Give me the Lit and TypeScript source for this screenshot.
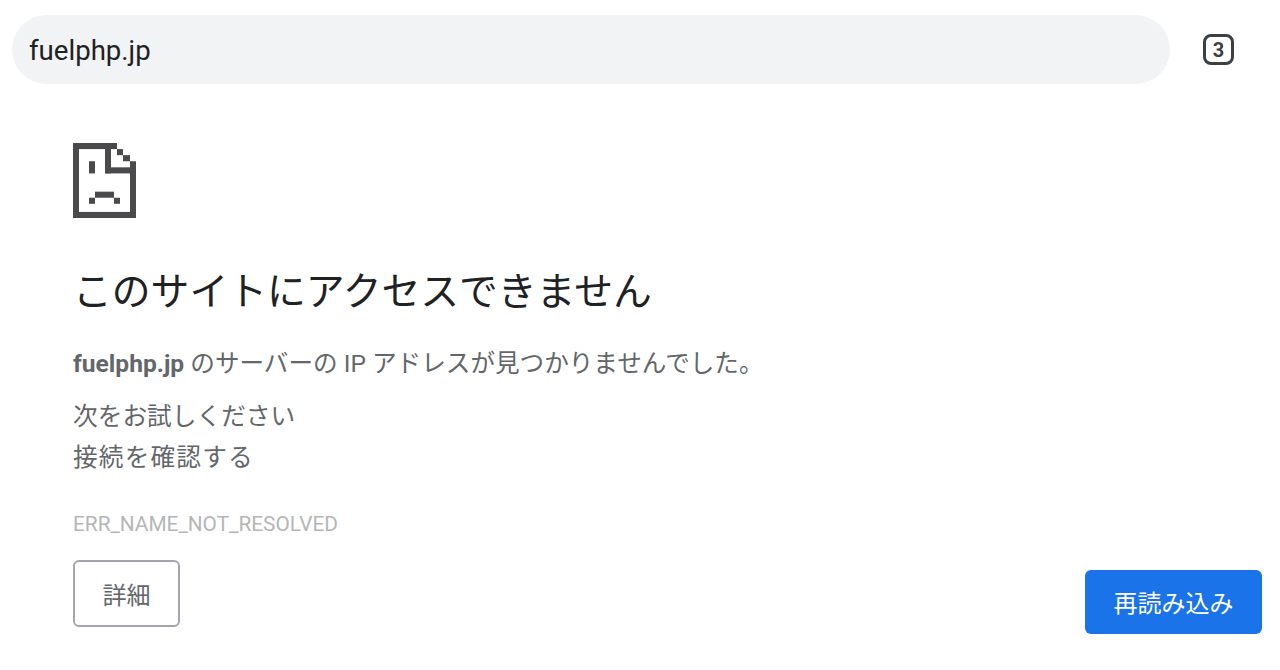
import { LitElement, html, css } from "lit";
import { customElement } from "lit/decorators.js";

@customElement("app-root")
export class AppRoot extends LitElement {
  static styles = css`
    :host { display: block; height: 670px; background: #fff; font-family: Roboto, "Noto Sans CJK JP", sans-serif; overflow: hidden; }
    .top { display: flex; align-items: center; padding: 15px 46px 0 12px; height: 69px; }
    .url { flex: 1; height: 69px; border-radius: 35px; background: #f1f3f4; display: flex; align-items: center; padding: 2px 0 0 17px; box-sizing: border-box; font-size: 27.6px; color: #202124; }
    .tabs { width: 31px; height: 31px; box-sizing: border-box; margin-left: 33px; border: 3px solid #3c4043; border-radius: 8px; display: flex; align-items: center; justify-content: center; font-size: 20px; font-weight: 700; color: #3c4043; }
    .main { padding: 59px 18px 0 73px; }
    .icon { display: block; width: 63px; height: 75px; }
    h1 { margin: 49px 0 0 0; font-size: 38.8px; line-height: 50px; font-weight: 400; color: #202124; }
    p { margin: 0; color: #63676b; font-size: 24.7px; }
    .desc { margin-top: 29px; line-height: 36px; font-size: 24.6px; }
    .desc b { font-weight: 700; }
    .try { margin-top: 14px; line-height: 41px; }
    .wide { letter-spacing: 1.15px; }
    .code { margin-top: 34px; font-size: 20.8px; line-height: 24px; color: #b4b6b8; }
    .actions { display: flex; justify-content: space-between; align-items: flex-start; margin-top: 24px; }
    button { font-family: inherit; font-size: 24px; box-sizing: border-box; border-radius: 6px; padding: 0; }
    .details { width: 107px; height: 67px; background: #fff; color: #63676b; border: 2px solid #a3a7ab; }
    .reload { width: 177px; height: 64px; margin-top: 10px; padding-bottom: 2px; background: #1a73e8; color: #fff; border: none; }
  `;

  render() {
    return html`
      <div class="top">
        <div class="url">fuelphp.jp</div>
        <div class="tabs">3</div>
      </div>
      <div class="main">
        <svg class="icon" viewBox="0 0 63 74" preserveAspectRatio="none" fill="#4a4a4d" aria-hidden="true">
          <rect x="0" y="0" width="6" height="74"/>
          <rect x="0" y="68" width="63" height="6"/>
          <rect x="57" y="18" width="6" height="56"/>
          <rect x="0" y="0" width="44" height="6"/>
          <rect x="32" y="0" width="6" height="30"/>
          <rect x="32" y="24" width="31" height="6"/>
          <rect x="44" y="6" width="6" height="6"/>
          <rect x="50" y="12" width="7" height="6"/>
          <rect x="16" y="18" width="6" height="12"/>
          <rect x="22" y="48" width="19" height="6"/>
          <rect x="16" y="54" width="6" height="6"/>
          <rect x="41" y="54" width="6" height="6"/>
        </svg>
        <h1>このサイトにアクセスできません</h1>
        <p class="desc"><b>fuelphp.jp</b> のサーバーの IP アドレスが見つかりませんでした。</p>
        <div class="try">
          <p>次をお試しください</p>
          <p class="wide">接続を確認する</p>
        </div>
        <p class="code">ERR_NAME_NOT_RESOLVED</p>
        <div class="actions">
          <button class="details">詳細</button>
          <button class="reload">再読み込み</button>
        </div>
      </div>
    `;
  }
}
